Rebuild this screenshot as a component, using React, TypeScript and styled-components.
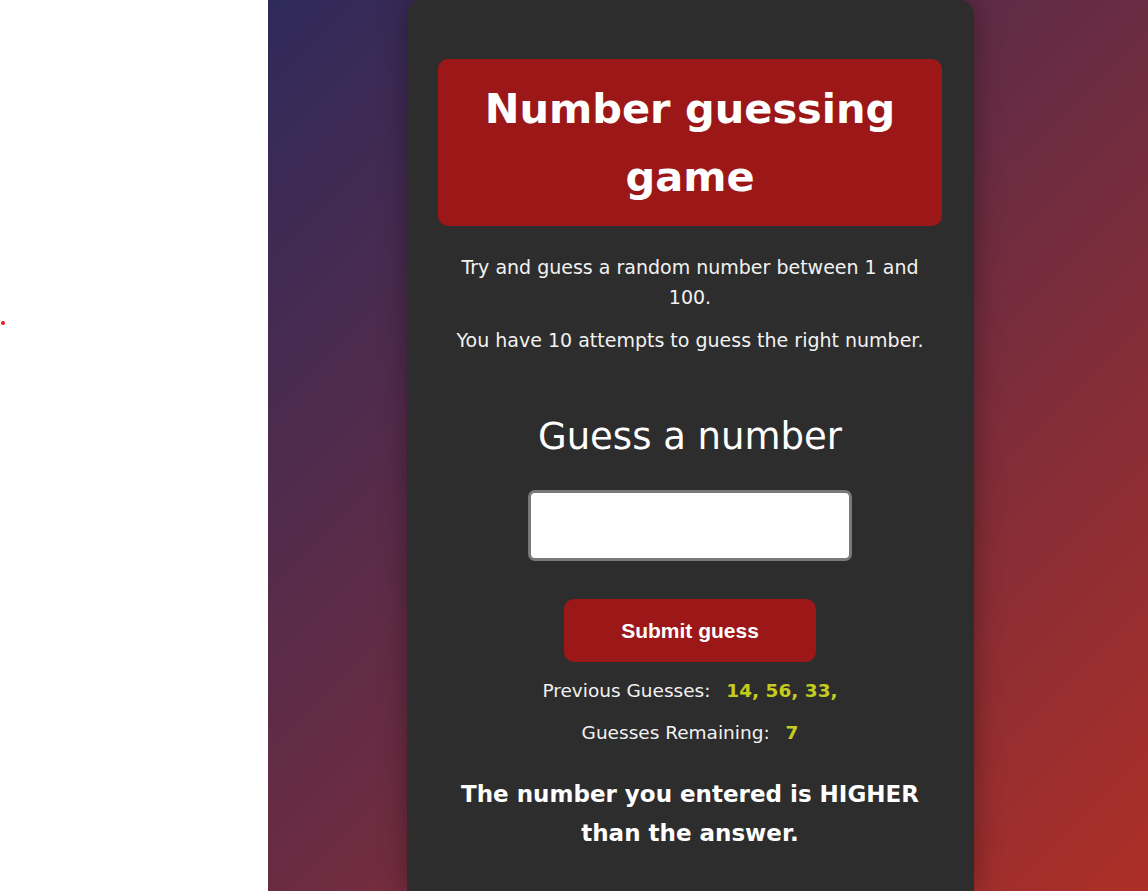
import React from "react";
import styled, { createGlobalStyle } from "styled-components";

const Global = createGlobalStyle`
  html, body { margin: 0; padding: 0; }
  body { font-family: "DejaVu Sans", "Noto Sans", sans-serif; }
`;

const Page = styled.div`
  display: flex;
  min-height: 891px;
  height: 100vh;
  overflow: hidden;
`;

const LeftPane = styled.aside`
  width: 268px;
  flex: 0 0 268px;
  background: #ffffff;
  padding-top: 321px;
  box-sizing: border-box;
`;

const Dot = styled.span`
  display: block;
  width: 4px;
  height: 4px;
  margin-left: 1px;
  border-radius: 50%;
  background: #e51c1c;
`;

const Stage = styled.main`
  flex: 1;
  display: flex;
  align-items: flex-start;
  padding-left: 139px;
  background: linear-gradient(135deg, #2f2a5b 0%, #6a2c42 50%, #ad2f27 100%);
`;

const Card = styled.section`
  width: 567px;
  min-height: 891px;
  box-sizing: border-box;
  background: #2d2d2d;
  border-radius: 15px 15px 0 0;
  padding: 59px 32px 0 31px;
  box-shadow: 0 0 28px rgba(0, 0, 0, 0.35);
  display: flex;
  flex-direction: column;
  align-items: center;
  color: #ffffff;
  text-align: center;
`;

const Header = styled.h1`
  width: 100%;
  height: 167px;
  margin: 0;
  box-sizing: border-box;
  display: flex;
  align-items: center;
  justify-content: center;
  background: #9c1718;
  border-radius: 10px;
  font-size: 41.5px;
  line-height: 68px;
  font-weight: 700;
  padding: 0 30px;
`;

const Intro = styled.p<{ $top: number }>`
  margin: ${(p) => p.$top}px 0 0;
  width: 490px;
  font-size: 19px;
  line-height: 30px;
  color: #f2f2f2;
`;

const Label = styled.h2`
  margin: 55px 0 0;
  font-size: 37px;
  line-height: 54px;
  font-weight: 400;
`;

const Field = styled.input`
  margin-top: 26px;
  width: 324px;
  height: 71px;
  box-sizing: border-box;
  background: #fff;
  border: 3px solid #7a7a7a;
  border-radius: 7px;
  font-size: 24px;
  outline: none;
`;

const Submit = styled.button`
  margin-top: 38px;
  width: 252px;
  height: 63px;
  border: none;
  border-radius: 10px;
  background: #9c1718;
  color: #fff;
  font-family: "Liberation Sans", Arial, sans-serif;
  font-weight: 700;
  font-size: 21px;
  cursor: pointer;
`;

const Stat = styled.p`
  margin: 15px 0 0;
  font-size: 18.5px;
  line-height: 27px;
  color: #f2f2f2;
`;

const Value = styled.span`
  margin-left: 10px;
  color: #c4cc1e;
  font-weight: 700;
`;

const Message = styled.p`
  margin: 29px 0 0;
  font-size: 23px;
  line-height: 39px;
  font-weight: 700;
  max-width: 490px;
`;

export default function App() {
  return (
    <>
      <Global />
      <Page>
        <LeftPane>
          <Dot />
        </LeftPane>
        <Stage>
          <Card>
            <Header>Number guessing game</Header>
            <Intro $top={26}>Try and guess a random number between 1 and 100.</Intro>
            <Intro $top={13}>You have 10 attempts to guess the right number.</Intro>
            <Label>Guess a number</Label>
            <Field type="text" aria-label="Guess" />
            <Submit>Submit guess</Submit>
            <Stat>
              Previous Guesses: <Value>14, 56, 33,</Value>
            </Stat>
            <Stat>
              Guesses Remaining: <Value>7</Value>
            </Stat>
            <Message>The number you entered is HIGHER than the answer.</Message>
          </Card>
        </Stage>
      </Page>
    </>
  );
}
